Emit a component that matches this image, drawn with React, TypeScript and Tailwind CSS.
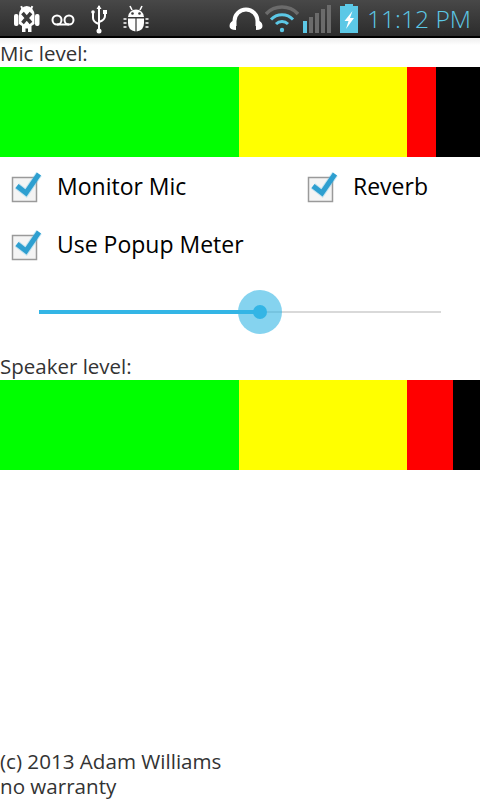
function Android() {
  return (
    <svg width="36" height="38" viewBox="0 0 36 38" className="absolute left-[10px] top-0">
      <g fill="#fff">
        <rect x="4" y="14" width="4.5" height="12" rx="2" />
        <rect x="25" y="14" width="4.5" height="12" rx="2" />
        <path d="M9 15 A7.75 9 0 0 1 24.5 15 L24.5 24 L21.5 26 L21.5 32 L18 32 L18 28.5 L15.5 28.5 L15.5 32 L12 32 L12 26 L9 24 Z" />
        <rect x="11" y="6" width="2" height="4" transform="rotate(-25 12 8)" />
        <rect x="20.5" y="6" width="2" height="4" transform="rotate(25 21.5 8)" />
      </g>
      <path d="M12.5 13 L21 23 M21 13 L12.5 23" stroke="#3b3b3b" strokeWidth="3.5" />
    </svg>
  );
}

function StatusBar() {
  return (
    <div className="relative h-[38px] bg-gradient-to-b from-[#484848] to-[#2c2c2c] border-b-2 border-black">
      <Android />
      <svg width="24" height="14" viewBox="0 0 24 14" className="absolute left-[51px] top-[13px]">
        <circle cx="6" cy="7" r="4.5" fill="none" stroke="#fff" strokeWidth="2" />
        <circle cx="18" cy="7" r="4.5" fill="none" stroke="#fff" strokeWidth="2" />
        <path d="M6 11.5 H18" stroke="#fff" strokeWidth="2" />
      </svg>
      <svg width="18" height="30" viewBox="0 0 18 30" className="absolute left-[90px] top-[4px]">
        <path d="M9 2 L9 28 M3 9 L3 14 Q3 18 9 20 M15 8 L15 12 Q15 16 9 18" stroke="#fff" strokeWidth="2" fill="none" />
        <path d="M9 1 L11.5 5 L6.5 5 Z" fill="#fff" />
        <circle cx="3" cy="8" r="1.8" fill="#fff" />
        <rect x="13" y="6" width="4" height="4" fill="#fff" />
        <circle cx="9" cy="27" r="2.5" fill="#fff" />
      </svg>
      <svg width="28" height="28" viewBox="0 0 28 28" className="absolute left-[122px] top-[5px]">
        <path d="M6 12 A8 7.5 0 0 1 22 12 Z" fill="#fff" />
        <path d="M6 13.5 H13.4 V26.5 Q6 25.5 6 18 Z M14.6 13.5 H22 V18 Q22 25.5 14.6 26.5 Z" fill="#fff" />
        <path d="M8 1 L10 5 M20 1 L18 5" stroke="#fff" strokeWidth="1.6" />
        <circle cx="10.5" cy="8.5" r="1.3" fill="#3b3b3b" />
        <circle cx="17.5" cy="8.5" r="1.3" fill="#3b3b3b" />
        <path d="M1.5 14 H4.5 M1.5 18 H4.5 M1.5 22 H4.5 M23.5 14 H26.5 M23.5 18 H26.5 M23.5 22 H26.5" stroke="#fff" strokeWidth="1.6" />
      </svg>
      <svg width="34" height="24" viewBox="0 0 34 24" className="absolute left-[229px] top-[7px]">
        <path d="M5.5 19 V14 A11.5 11.5 0 0 1 28.5 14 V19" fill="none" stroke="#fff" strokeWidth="4" />
        <path d="M0.5 19 Q0.5 14 7 13 V23 Q0.5 23 0.5 19 Z M33.5 19 Q33.5 14 27 13 V23 Q33.5 23 33.5 19 Z" fill="#fff" />
      </svg>
      <svg width="34" height="28" viewBox="0 0 34 28" className="absolute left-[265px] top-[5px]">
        <path d="M1 9 A22 22 0 0 1 33 9" fill="none" stroke="#6b6b6b" strokeWidth="3.5" />
        <path d="M6 14.5 A15 15 0 0 1 28 14.5" fill="none" stroke="#5cc8e6" strokeWidth="3" />
        <path d="M11 19 A8.5 8.5 0 0 1 23 19" fill="none" stroke="#5cc8e6" strokeWidth="3" />
        <circle cx="17" cy="25" r="2.2" fill="#5cc8e6" />
      </svg>
      <div className="absolute left-[303px] top-[5px] flex h-[28px] items-end gap-[2px]">
        <div className="h-[12px] w-[4px] bg-[#5cc8e6]" />
        <div className="h-[16px] w-[4px] bg-[#6b6b6b]" />
        <div className="h-[20px] w-[4px] bg-[#6b6b6b]" />
        <div className="h-[24px] w-[4px] bg-[#6b6b6b]" />
        <div className="h-[28px] w-[4px] bg-[#6b6b6b]" />
      </div>
      <svg width="18" height="29" viewBox="0 0 18 29" className="absolute left-[340px] top-[4px]">
        <path d="M5 0 H13 V2 H18 V29 H0 V2 H5 Z" fill="#5cc8e6" />
        <path d="M12.5 7 L4.5 17 H8.5 L6 25 L14 14 H10 Z" fill="#fff" />
      </svg>
      <div className="absolute left-[367px] top-[4px] font-['Open_Sans',sans-serif] text-[24.6px] font-light leading-[30px] text-[#5cc8e6]">
        11:12 PM
      </div>
    </div>
  );
}

function Meter({ red }: { red: number }) {
  return (
    <div className="flex h-[90px]">
      <div className="w-[239px] bg-[#00ff00]" />
      <div className="w-[168px] bg-[#ffff00]" />
      <div className="bg-[#ff0000]" style={{ width: red }} />
      <div className="flex-1 bg-black" />
    </div>
  );
}

function Check({ label }: { label: string }) {
  return (
    <div className="flex items-center">
      <svg width="32" height="32" viewBox="0 0 32 32" className="ml-[10px] shrink-0">
        <rect x="2.5" y="6.5" width="24" height="24" fill="#f4f4f4" stroke="#9a9a9a" strokeWidth="1.5" />
        <path d="M7 15 L16 22 L29 3" fill="none" stroke="#6fc3e6" strokeWidth="7" opacity="0.35" />
        <path d="M7 15 L16 22 L29 3" fill="none" stroke="#2e9fd0" strokeWidth="5" />
      </svg>
      <span className="ml-[15px] -translate-y-[1px] text-[23px] leading-[32px] text-black">{label}</span>
    </div>
  );
}

export default function App() {
  return (
    <div className="flex h-[800px] w-[480px] flex-col bg-white font-['Open_Sans',sans-serif]">
      <StatusBar />
      <div className="bg-gradient-to-b from-[#eeeeee] to-white to-[25%] pt-[2px] text-[20.5px] leading-[27px] text-[#333]">Mic level:</div>
      <Meter red={29} />
      <div className="flex justify-between pt-[14px]">
        <Check label="Monitor Mic" />
        <div className="w-[182px]">
          <div className="w-full -translate-x-[2px]"><Check label="Reverb" /></div>
        </div>
      </div>
      <div className="pt-[26px]"><Check label="Use Popup Meter" /></div>
      <div className="relative ml-[39px] mr-[39px] mt-[24px] h-[54px]">
        <div className="absolute left-0 right-0 top-[26px] h-[2px] bg-[#d9d9d9]" />
        <div className="absolute left-0 top-[25px] h-[4px] w-[221px] bg-[#33b5e5]" />
        <div className="absolute left-[199px] top-[5px] h-[44px] w-[44px] rounded-full bg-[#33b5e5]/60" />
        <div className="absolute left-[214px] top-[20px] h-[14px] w-[14px] rounded-full bg-[#33b5e5]" />
      </div>
      <div className="pt-[14px] text-[20.5px] leading-[27px] text-[#333]">Speaker level:</div>
      <Meter red={46} />
      <div className="mt-auto pb-[1px] text-[20.6px] leading-[25px] text-[#333]">
        <div>(c) 2013 Adam Williams</div>
        <div>no warranty</div>
      </div>
    </div>
  );
}
